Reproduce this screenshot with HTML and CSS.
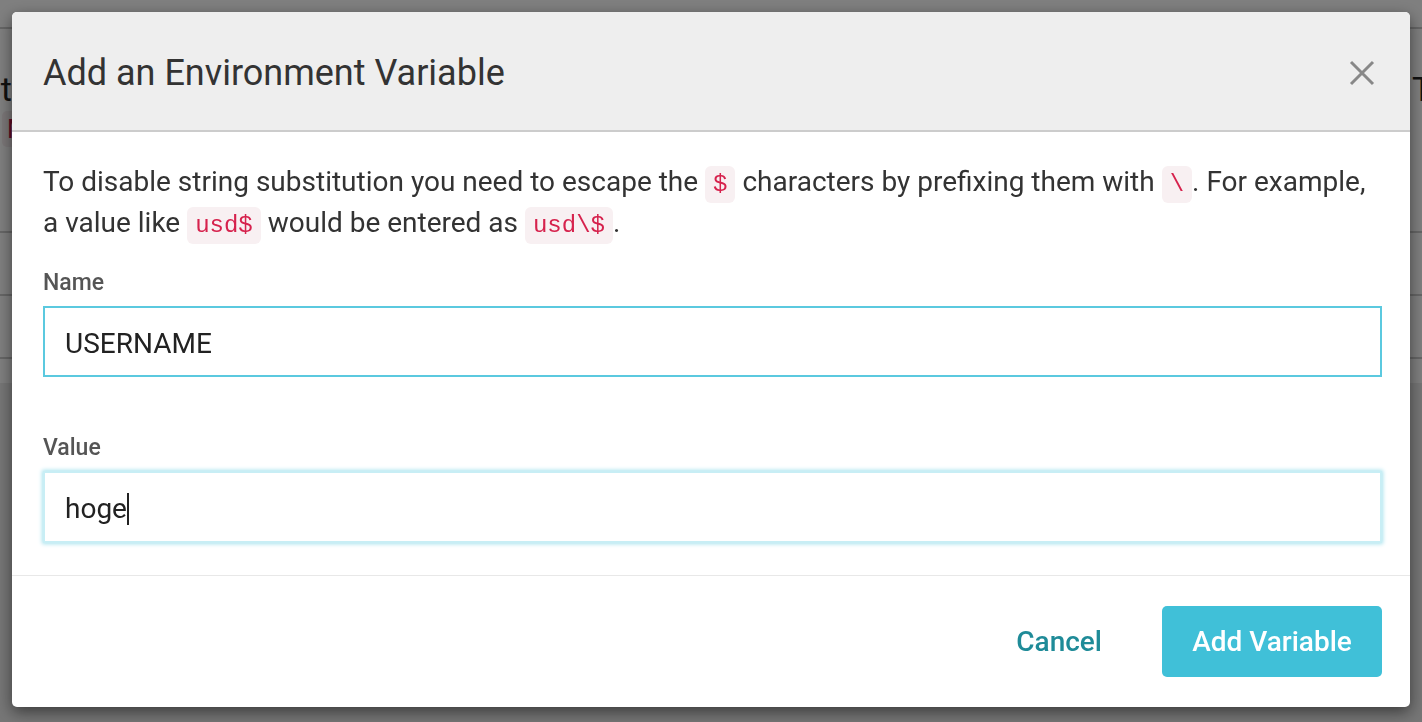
FILE: index.html
```html
<!DOCTYPE html>
<html lang="en">
<head>
    <meta charset="UTF-8">
    <meta name="viewport" content="width=device-width, initial-scale=1.0">
    <title>Environment Variables</title>
    <link rel="stylesheet" href="styles.css">
</head>
<body>
    <div class="page">
        <div class="page-top"></div>
        <div class="page-head">
            <span class="cut-left">Environment</span>
            <span class="cut-right">Type</span>
        </div>
        <div class="page-tag"><span class="tag">Manual</span></div>
        <div class="page-row"></div>
        <div class="page-row"></div>
        <div class="page-rest"></div>
    </div>

    <div class="overlay">
        <div class="modal">
            <div class="modal-header">
                <h2>Add an Environment Variable</h2>
                <button class="close" type="button" aria-label="Close">
                    <svg width="26" height="26" viewBox="0 0 26 26">
                        <path d="M2 2 L24 24 M24 2 L2 24" stroke="#888" stroke-width="3" fill="none"/>
                    </svg>
                </button>
            </div>
            <div class="modal-body">
                <p class="hint">To disable string substitution you need to escape the <code>$</code> characters by prefixing them with <code>\</code>. For example, a value like <code>usd$</code> would be entered as <code>usd\$</code>.</p>
                <form id="envForm">
                    <div class="field">
                        <label for="name">Name</label>
                        <input type="text" id="name" class="input" value="USERNAME">
                    </div>
                    <div class="field last">
                        <label for="value">Value</label>
                        <div class="input focused">hoge<span class="caret"></span></div>
                    </div>
                </form>
            </div>
            <div class="modal-footer">
                <button type="button" class="btn-link">Cancel</button>
                <button type="submit" class="btn-primary">Add Variable</button>
            </div>
        </div>
    </div>
</body>
</html>
```

FILE: styles.css
```css
* {
    margin: 0;
    padding: 0;
    box-sizing: border-box;
    font-family: Roboto, "Liberation Sans", sans-serif;
}
body {
    height: 100vh;
    overflow: hidden;
    background: #fff;
}
.page {
    height: 100%;
    display: flex;
    flex-direction: column;
}
.page-top {
    height: 29px;
    border-bottom: 2px solid #ccc;
}
.page-head {
    height: 80px;
    display: flex;
    justify-content: space-between;
    align-items: flex-end;
    font-size: 34px;
    line-height: 40px;
    color: #222;
}
.cut-left {
    width: 12px;
    overflow: hidden;
    direction: rtl;
    white-space: nowrap;
}
.cut-right {
    width: 10px;
    overflow: hidden;
    white-space: nowrap;
}
.page-tag {
    height: 124px;
    padding: 2px 0 0 2px;
    border-bottom: 2px solid #ccc;
}
.tag {
    display: inline-block;
    font-size: 26px;
    line-height: 36px;
    color: #c0144a;
    background: #f6eef0;
    border-radius: 5px;
    padding: 0 5px;
    white-space: nowrap;
}
.page-row {
    height: 63px;
    border-bottom: 2px solid #ccc;
}
.page-rest {
    flex: 1;
    margin-top: 24px;
    background: #ececec;
}
.overlay {
    position: fixed;
    inset: 0;
    background: rgba(0, 0, 0, 0.5);
    padding: 12px;
}
.modal {
    background: white;
    border-radius: 5px;
    box-shadow: 0 5px 15px rgba(0, 0, 0, 0.5);
    width: 1398px;
    height: 695px;
    display: flex;
    flex-direction: column;
    overflow: hidden;
}
.modal-header {
    height: 120px;
    background: #eee;
    border-bottom: 2px solid #ccc;
    display: flex;
    align-items: center;
    justify-content: space-between;
    padding: 4px 35px 0 31px;
}
.modal-header h2 {
    font-size: 36px;
    font-weight: 400;
    color: #333;
}
.close {
    background: none;
    border: none;
    display: flex;
}
.modal-body {
    flex: 1;
    padding: 31px 28px 0 31px;
}
.hint {
    font-size: 28px;
    line-height: 38px;
    color: #333;
    margin-bottom: 24px;
}
code {
    font-family: "Liberation Mono", monospace;
    font-size: 24px;
    color: #d6224d;
    background: #f8f0f2;
    border-radius: 6px;
    padding: 5px 8px;
}
.field {
    display: flex;
    flex-direction: column;
    margin-bottom: 57px;
}
.field.last {
    margin-bottom: 0;
}
label {
    font-size: 23px;
    font-weight: 500;
    color: #555;
    line-height: 28px;
    margin-bottom: 9px;
}
.input {
    height: 71px;
    width: 100%;
    border: 2px solid #5bc9df;
    padding: 3px 20px 0;
    font-size: 28px;
    color: #222;
    outline: none;
    background: white;
}
.focused {
    display: flex;
    align-items: center;
    height: 72px;
    border-color: #c8eef5;
    box-shadow: 0 0 4px 1px #a8e3ee;
}
.caret {
    display: inline-block;
    width: 2px;
    height: 32px;
    background: #222;
}
.modal-footer {
    border-top: 1px solid #e8e8e8;
    height: 132px;
    display: flex;
    justify-content: flex-end;
    align-items: center;
    padding: 0 28px;
    gap: 30px;
}
.btn-link {
    background: none;
    border: none;
    color: #1f8b98;
    font-size: 28px;
    font-weight: 500;
    padding: 0 30px;
    cursor: pointer;
}
.btn-primary {
    width: 220px;
    height: 71px;
    background-color: #40c0d8;
    color: white;
    border: none;
    border-radius: 5px;
    font-size: 28px;
    font-weight: 500;
    cursor: pointer;
}
```
